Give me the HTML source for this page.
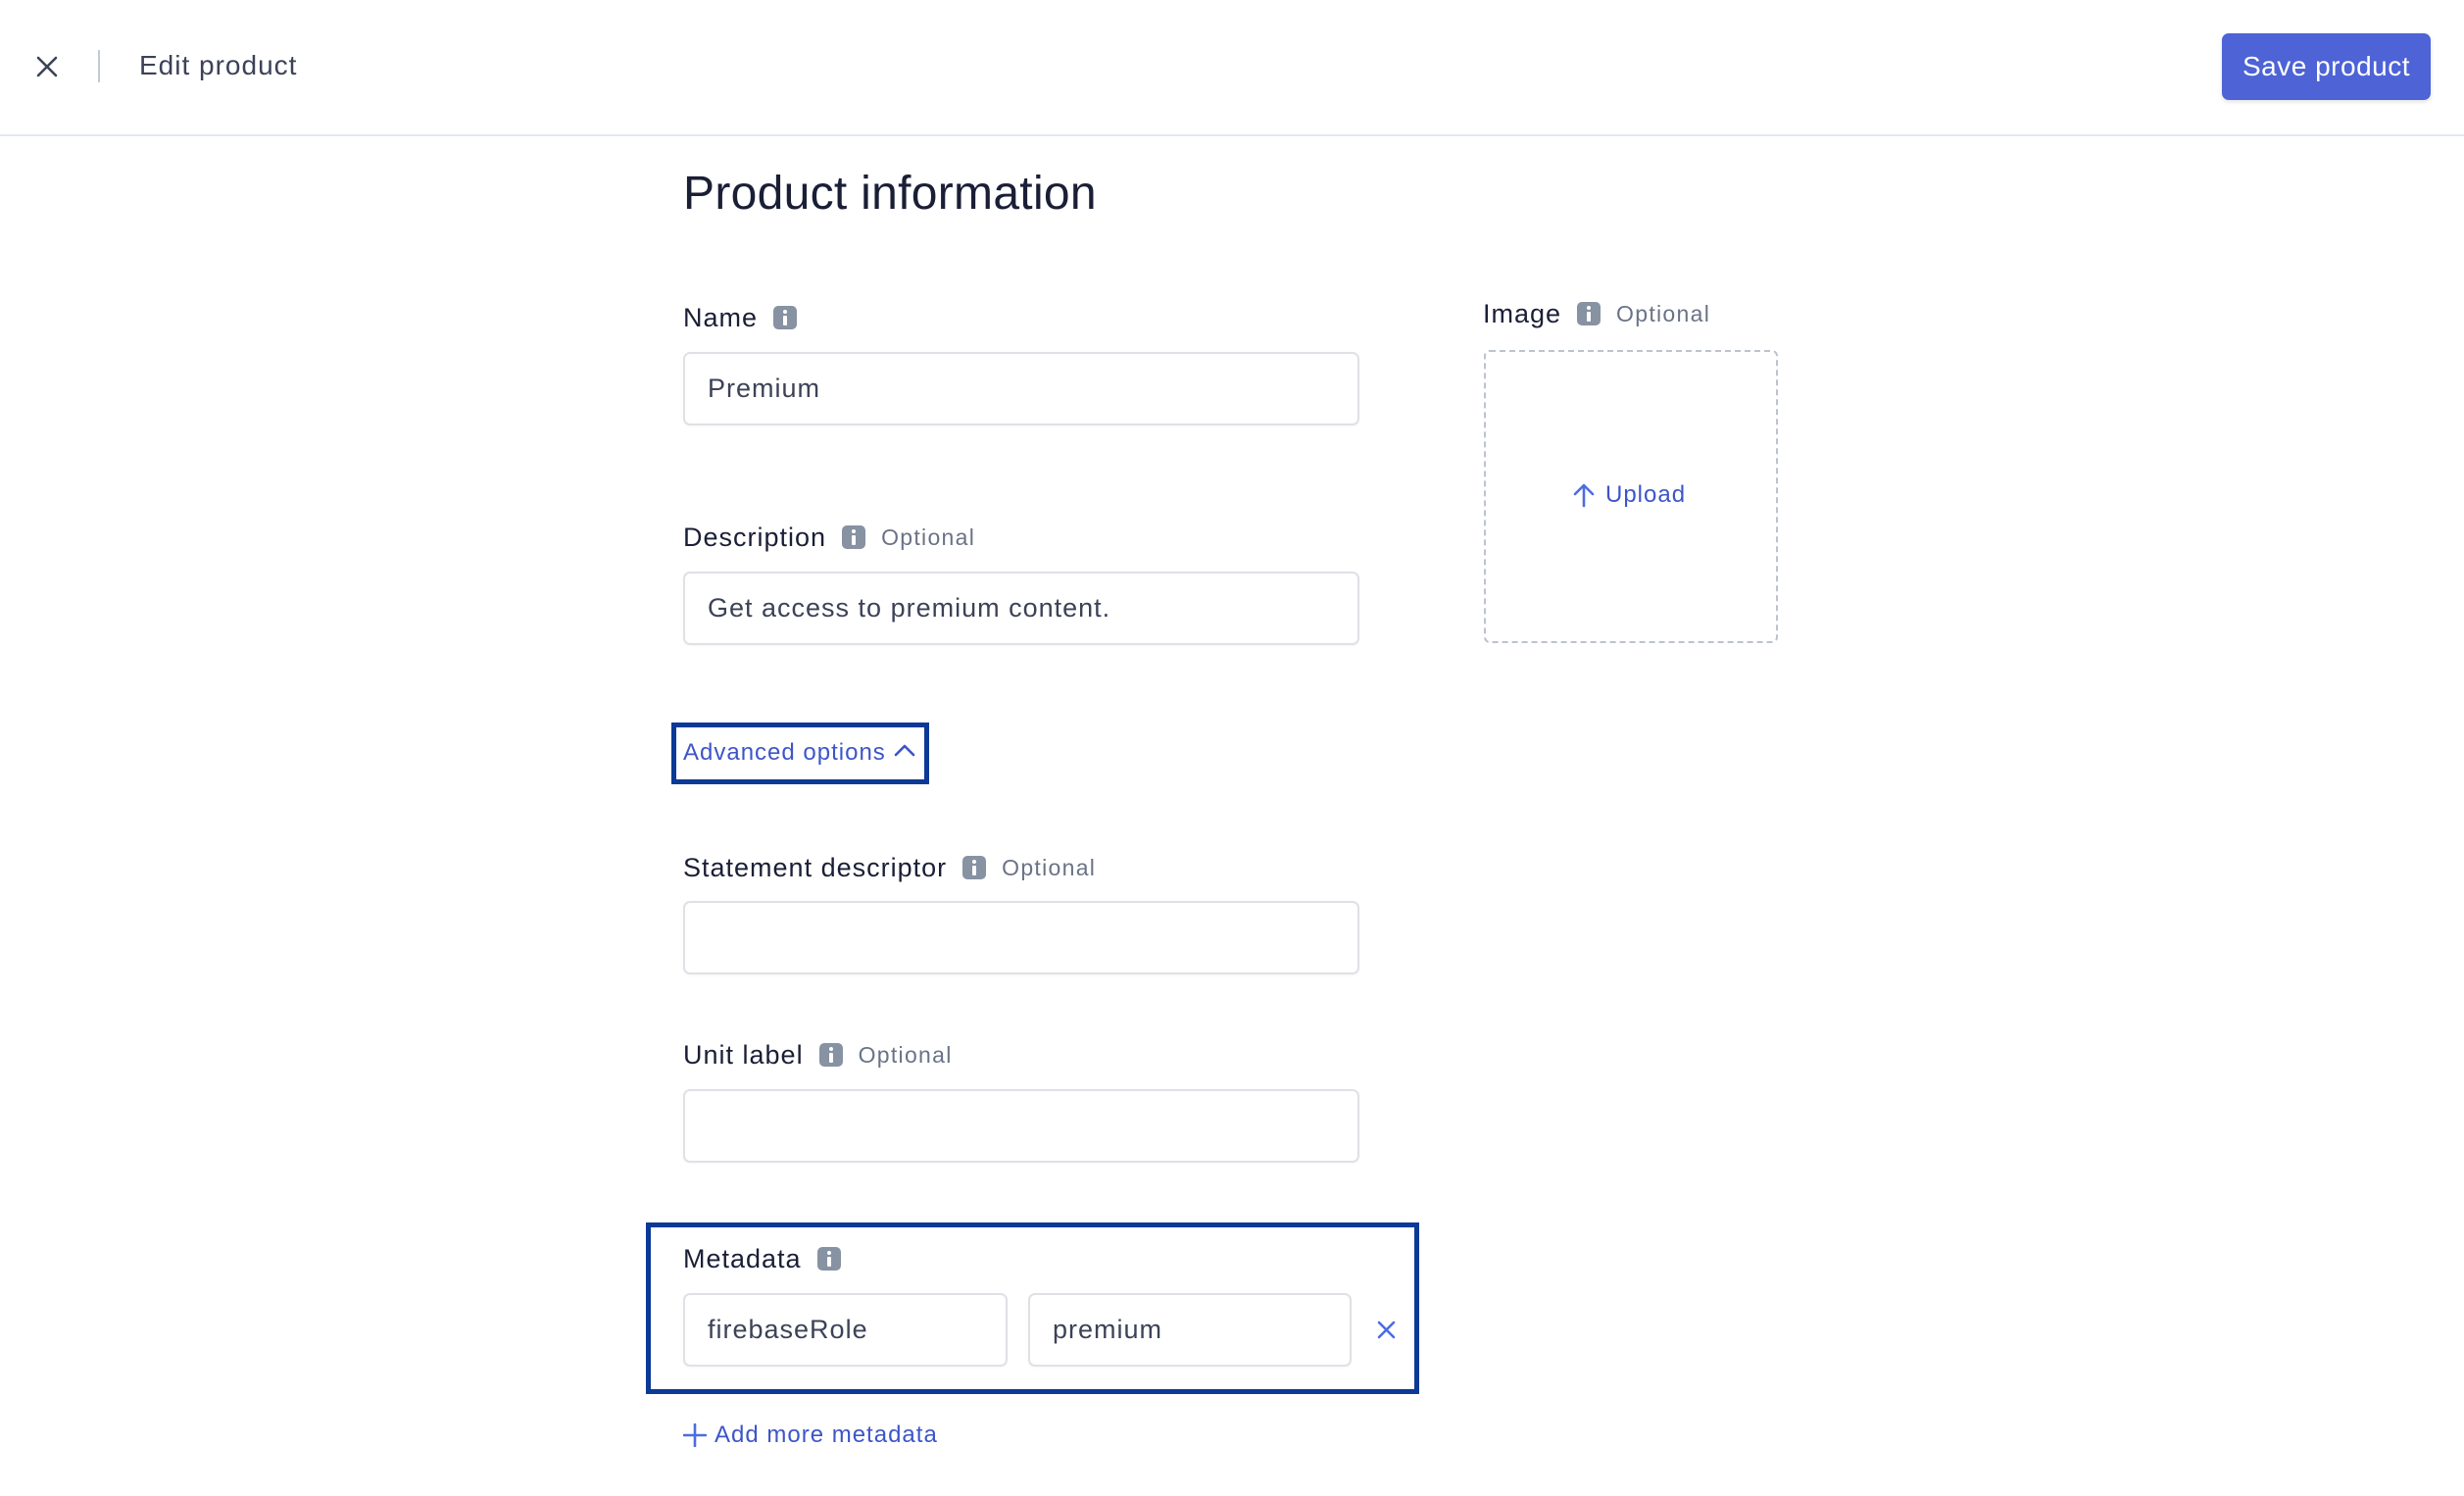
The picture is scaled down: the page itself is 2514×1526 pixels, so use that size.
<!DOCTYPE html>
<html><head><meta charset="utf-8"><style>
*{box-sizing:border-box;margin:0;padding:0}
body{width:2514px;height:1526px;background:#fff;font-family:"Liberation Sans",sans-serif;color:#1a1f36;position:relative;overflow:hidden;letter-spacing:1px}
.a{position:absolute}
.hdr{left:0;top:0;width:2514px;height:139px;border-bottom:2px solid #e3e8ee}
.lbl{font-size:27px;color:#1a1f36;line-height:32px;white-space:nowrap;display:flex;align-items:center}
.opt{font-size:23px;color:#697386;margin-left:16px;letter-spacing:1.3px}
.ic{display:inline-block;width:24px;height:24px;border-radius:5px;background:#8792a2;margin-left:16px;position:relative}
.ic:before{content:"";position:absolute;left:10px;top:4px;width:4px;height:4px;background:#fff;border-radius:2px}
.ic:after{content:"";position:absolute;left:10px;top:10px;width:4px;height:10px;background:#fff;border-radius:1px}
.inp{border:2px solid #dfe1e6;border-radius:7px;height:75px;font-size:27px;color:#3c4257;padding-left:23px;display:flex;align-items:center;box-shadow:0 1px 2px rgba(0,0,0,.04)}
.blue{color:#3d55c9}
</style></head><body>
<div class="a hdr"></div>
<svg class="a" style="left:37px;top:57px" width="22" height="22" viewBox="0 0 22 22"><path d="M2 2L20 20M20 2L2 20" stroke="#3c4257" stroke-width="2.6" stroke-linecap="round"/></svg>
<div class="a" style="left:100px;top:51px;width:2px;height:33px;background:#c4cad3"></div>
<div class="a" style="left:142px;top:50px;font-size:28px;color:#3c4257;line-height:34px">Edit product</div>
<div class="a" style="left:2267px;top:34px;width:213px;height:68px;background:#4d63d6;border-radius:7px;color:#fff;font-size:28px;display:flex;align-items:center;justify-content:center;box-shadow:0 2px 4px rgba(0,0,0,.12);letter-spacing:0.5px">Save product</div>

<div class="a" style="left:697px;top:170px;font-size:48px;color:#1a1f36;line-height:56px;letter-spacing:0.3px">Product information</div>

<div class="a lbl" style="left:697px;top:308px">Name<span class="ic"></span></div>
<div class="a inp" style="left:697px;top:359px;width:690px">Premium</div>

<div class="a lbl" style="left:697px;top:532px">Description<span class="ic"></span><span class="opt">Optional</span></div>
<div class="a inp" style="left:697px;top:583px;width:690px">Get access to premium content.</div>

<div class="a" style="left:685px;top:737px;width:263px;height:63px;border:5px solid #0a3a96"></div>
<div class="a blue" style="left:697px;top:753px;font-size:24px;line-height:30px">Advanced options</div>
<svg class="a" style="left:912px;top:757px" width="22" height="16" viewBox="0 0 22 16"><path d="M2 13L11 4L20 13" fill="none" stroke="#3d55c9" stroke-width="2.6" stroke-linecap="round" stroke-linejoin="round"/></svg>

<div class="a lbl" style="left:697px;top:869px">Statement descriptor<span class="ic"></span><span class="opt">Optional</span></div>
<div class="a inp" style="left:697px;top:919px;width:690px"></div>

<div class="a lbl" style="left:697px;top:1060px">Unit label<span class="ic"></span><span class="opt">Optional</span></div>
<div class="a inp" style="left:697px;top:1111px;width:690px"></div>

<div class="a" style="left:659px;top:1247px;width:789px;height:175px;border:5px solid #0a3a96"></div>
<div class="a lbl" style="left:697px;top:1268px">Metadata<span class="ic"></span></div>
<div class="a inp" style="left:697px;top:1319px;width:331px">firebaseRole</div>
<div class="a inp" style="left:1049px;top:1319px;width:330px">premium</div>
<svg class="a" style="left:1405px;top:1347px" width="19" height="19" viewBox="0 0 19 19"><path d="M2 2L17 17M17 2L2 17" stroke="#4d6ce0" stroke-width="2.6" stroke-linecap="round"/></svg>

<svg class="a" style="left:697px;top:1452px" width="24" height="24" viewBox="0 0 24 24"><path d="M12 1V23M1 12H23" stroke="#4d6ce0" stroke-width="2.6" stroke-linecap="round"/></svg>
<div class="a blue" style="left:729px;top:1449px;font-size:24px;line-height:30px">Add more metadata</div>

<div class="a lbl" style="left:1513px;top:304px">Image<span class="ic"></span><span class="opt">Optional</span></div>
<div class="a" style="left:1514px;top:357px;width:300px;height:299px;border:2px dashed #bcc3cd;border-radius:6px"></div>
<svg class="a" style="left:1605px;top:492px" width="22" height="26" viewBox="0 0 22 26"><path d="M11 24V3M2 12L11 3L20 12" fill="none" stroke="#4d6ce0" stroke-width="2.6" stroke-linecap="round" stroke-linejoin="round"/></svg>
<div class="a blue" style="left:1638px;top:490px;font-size:24px;line-height:30px">Upload</div>
</body></html>
